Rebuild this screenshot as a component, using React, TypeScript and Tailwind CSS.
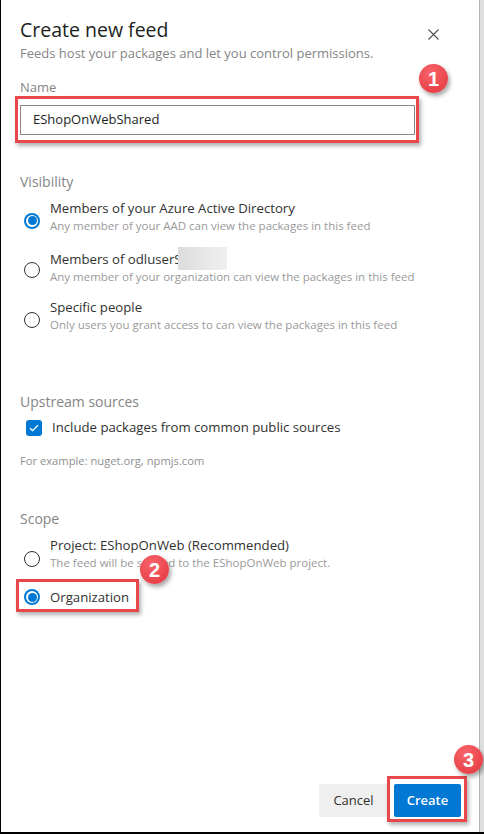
import React from "react";

const BLUE = "#0078d4";

function Radio({ checked, className = "" }: { checked?: boolean; className?: string }) {
  if (checked) {
    return (
      <span className={`flex h-4 w-4 shrink-0 items-center justify-center rounded-full bg-[#0078d4] ${className}`}>
        <span className="flex h-[12px] w-[12px] items-center justify-center rounded-full bg-white">
          <span className="h-[9px] w-[9px] rounded-full bg-[#0078d4]" />
        </span>
      </span>
    );
  }
  return <span className={`h-4 w-4 shrink-0 rounded-full border border-[#323130] bg-white ${className}`} />;
}

function Badge({ n, className }: { n: number; className: string }) {
  return (
    <div
      className={`absolute flex h-[29px] w-[29px] items-center justify-center rounded-full bg-[radial-gradient(circle_at_40%_30%,#f8646a,#e2353d)] text-[20px] font-bold leading-none text-white shadow-[2px_3px_4px_rgba(0,0,0,0.35)] font-['Liberation_Sans',Arial,sans-serif] ${className}`}
    >
      {n}
    </div>
  );
}

function Highlight({ className }: { className: string }) {
  return (
    <div className={`pointer-events-none absolute border-[3px] border-[#e8474c] shadow-[2px_3px_4px_rgba(0,0,0,0.3)] ${className}`} />
  );
}

export default function App() {
  return (
    <div className="relative flex h-[834px] w-[484px] overflow-hidden border-b-2 border-l border-black bg-white font-['Segoe_UI','Open_Sans',sans-serif] text-[#323130]">
      <div className="flex flex-1 flex-col pl-[19px] pr-[18px]">
        {/* Header */}
        <div className="flex items-start justify-between pt-[15px]">
          <h1 className="text-[19.5px] leading-[30px] text-[#201f1e]">Create new feed</h1>
          <svg className="mr-[22px] mt-[14px]" width="11" height="11" viewBox="0 0 11 11">
            <path d="M0.5 0.5 L10.5 10.5 M10.5 0.5 L0.5 10.5" stroke="#505050" strokeWidth="1.1" />
          </svg>
        </div>
        <p className="-mt-[1px] text-[13px] leading-[18px] text-[#858585]">
          Feeds host your packages and let you control permissions.
        </p>

        {/* Name */}
        <div className="mt-[16px] text-[13px] leading-[18px] text-[#858585]">Name</div>
        <div className="mt-[9px] flex h-[30px] w-[395px] items-center border border-[#8a8886] px-[12px] text-[13px] text-[#201f1e]">
          EShopOnWebShared
        </div>

        {/* Visibility */}
        <div className="mt-[37px] text-[14px] leading-[20px] text-[#858585]">Visibility</div>
        <div className="mt-[7px] flex flex-col gap-[12px]">
          <div className="flex items-center">
            <Radio checked className="ml-[4px] mt-[7px]" />
            <div className="ml-[10px]">
              <div className="text-[13.2px] leading-[18px]">Members of your Azure Active Directory</div>
              <div className="text-[11.5px] leading-[18px] text-[#9a9a9a]">
                Any member of your AAD can view the packages in this feed
              </div>
            </div>
          </div>
          <div className="flex items-center">
            <Radio className="ml-[4px] mt-[7px]" />
            <div className="ml-[10px]">
              <div className="flex items-end text-[13.2px] leading-[18px]">
                <span>Members of odluserS</span>
                <span className="-ml-[4px] -mb-[2px] inline-block h-[23px] w-[49px] bg-[linear-gradient(90deg,#dcdcdc,#f0f0f0)]" />
              </div>
              <div className="text-[11.5px] leading-[18px] text-[#9a9a9a]">
                Any member of your organization can view the packages in this feed
              </div>
            </div>
          </div>
          <div className="flex items-center">
            <Radio className="ml-[4px] mt-[7px]" />
            <div className="ml-[10px]">
              <div className="text-[13.2px] leading-[18px]">Specific people</div>
              <div className="text-[11.5px] leading-[18px] text-[#9a9a9a]">
                Only users you grant access to can view the packages in this feed
              </div>
            </div>
          </div>
        </div>

        {/* Upstream sources */}
        <div className="mt-[58px] text-[14px] leading-[20px] text-[#858585]">Upstream sources</div>
        <div className="mt-[6px] flex h-[20px] items-center pl-[6px]">
          <span className="flex h-4 w-4 items-center justify-center rounded-[3px] bg-[#0078d4]">
            <svg width="10" height="8" viewBox="0 0 10 8">
              <path d="M1 4.2 L3.6 6.6 L9 1.2" fill="none" stroke="white" strokeWidth="1.3" />
            </svg>
          </span>
          <span className="ml-[10px] text-[13.2px]">Include packages from common public sources</span>
        </div>
        <div className="mt-[15px] text-[11.2px] leading-[16px] text-[#8f8f8f]">For example: nuget.org, npmjs.com</div>

        {/* Scope */}
        <div className="mt-[40px] text-[14px] leading-[20px] text-[#858585]">Scope</div>
        <div className="mt-[7px] flex items-center">
          <Radio className="ml-[4px] mt-[10px]" />
          <div className="ml-[10px]">
            <div className="text-[13.2px] leading-[18px]">Project: EShopOnWeb (Recommended)</div>
            <div className="text-[11.5px] leading-[18px] text-[#9a9a9a]">
              The feed will be scoped to the EShopOnWeb project.
            </div>
          </div>
        </div>
        <div className="mt-[16px] flex h-[18px] items-center">
          <Radio checked className="ml-[4px]" />
          <span className="ml-[10px] text-[13.2px] leading-[18px]">Organization</span>
        </div>

        {/* Footer */}
        <div className="flex-1" />
        <div className="flex justify-end gap-[6px] pb-[15px]">
          <button className="h-[33px] w-[69px] rounded-[2px] bg-[#efefef] text-[13px] text-[#323130]">Cancel</button>
          <button className="h-[33px] w-[67px] rounded-[2px] text-[13px] font-semibold text-white" style={{ backgroundColor: BLUE }}>
            Create
          </button>
        </div>
      </div>
      <div className="w-[5px] border-l border-[#b5b5b5] bg-[#dedede]" />

      {/* Annotations */}
      <Highlight className="left-[14px] top-[96px] h-[47px] w-[404px]" />
      <Highlight className="left-[15px] top-[579px] h-[33px] w-[123px]" />
      <Highlight className="left-[386px] top-[776px] h-[46px] w-[80px]" />
      <Badge n={1} className="left-[418px] top-[64px]" />
      <Badge n={2} className="left-[139px] top-[555px]" />
      <Badge n={3} className="left-[453px] top-[745px]" />
    </div>
  );
}
